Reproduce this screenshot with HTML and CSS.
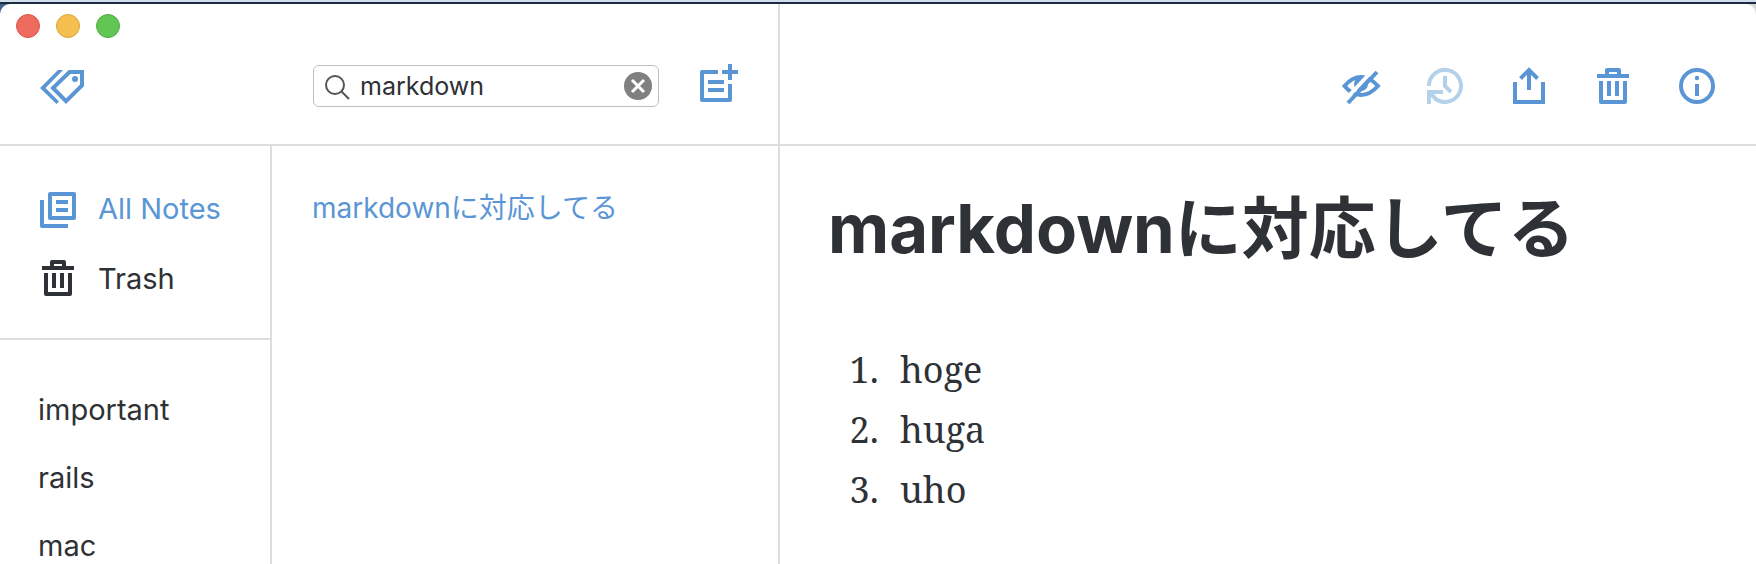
FILE: index.html
```html
<!DOCTYPE html>
<html lang="ja">
<head>
  <meta charset="UTF-8" />
  <meta name="viewport" content="width=device-width, initial-scale=1" />
  <title>markdownに対応してる</title>
  <link rel="stylesheet" href="styles.css">
</head>
<body>
  <svg class="symbols" aria-hidden="true">
    <symbol id="icon-trash" viewBox="0 0 40 40">
      <g fill="none" stroke="currentColor" stroke-width="4" stroke-linejoin="round">
        <path d="M4 10H36" />
        <path d="M14 9V4H26V9" />
        <path d="M8 15V36H32V15" />
        <path d="M16 15V30M24 15V30" />
      </g>
    </symbol>
  </svg>

  <div class="window">
    <div class="left-pane">
      <header class="left-header">
        <div class="lights">
          <button class="light close" aria-label="Close"></button>
          <button class="light minimize" aria-label="Minimize"></button>
          <button class="light maximize" aria-label="Maximize"></button>
        </div>
        <div class="left-toolbar">
          <button class="icon-btn" aria-label="Tags">
            <svg class="icon-wide" viewBox="0 0 48 40">
              <path fill="currentColor" d="M20 4H25L7.5 22 21 35.500 18.500 38 2 22Z" />
              <path fill="none" stroke="currentColor" stroke-width="4" d="M31.500 6H44V19.500L28 35.200 15 22Z" />
              <circle fill="currentColor" cx="37" cy="13" r="3" />
            </svg>
          </button>
          <div class="search">
            <svg class="search-icon" viewBox="0 0 28 28">
              <circle cx="11" cy="13" r="9" />
              <path d="M17.500 19.500L25 27" />
            </svg>
            <input type="text" class="search-input" aria-label="Search notes" value="markdown">
            <button class="clear-btn" aria-label="Clear search">
              <svg viewBox="0 0 28 28">
                <circle cx="14" cy="14" r="14" fill="#808080" />
                <path d="M8 8L20 20M20 8L8 20" stroke="#fff" stroke-width="3" />
              </svg>
            </button>
          </div>
          <button class="icon-btn" aria-label="New note">
            <svg class="icon" viewBox="0 0 40 40">
              <g fill="none" stroke="currentColor" stroke-width="4">
                <path stroke-linejoin="round" d="M20 6H4V34H32V18" />
                <path d="M32 -2V14M24 6H40" />
                <path d="M10 16H26M10 24H26" />
              </g>
            </svg>
          </button>
        </div>
      </header>

      <div class="columns">
        <nav class="sidebar">
          <div class="folders">
            <a class="folder active" href="#all">
              <svg class="icon" viewBox="0 0 40 40">
                <g fill="none" stroke="currentColor" stroke-width="4" stroke-linejoin="round">
                  <path d="M12 6H36V30H12Z" />
                  <path d="M4 12V38H30" />
                  <path d="M18 14H30M18 22H30" />
                </g>
              </svg>
              All Notes
            </a>
            <a class="folder" href="#trash">
              <svg class="icon"><use href="#icon-trash" /></svg>
              Trash
            </a>
          </div>
          <div class="tags">
            <a class="tag" href="#important">important</a>
            <a class="tag" href="#rails">rails</a>
            <a class="tag" href="#mac">mac</a>
          </div>
        </nav>
        <section class="note-list">
          <a class="note" href="#note">markdownに対応してる</a>
        </section>
      </div>
    </div>

    <main class="editor">
      <header class="editor-toolbar">
        <button class="icon-btn" aria-label="Preview">
          <svg class="icon" viewBox="0 0 40 40">
            <path fill="none" stroke="currentColor" stroke-width="4" d="M3.500 20Q11 11 20 11T37 20Q29 29 20 29T3.500 20Z" />
            <circle fill="currentColor" cx="20" cy="18" r="7" />
            <path stroke="#fff" stroke-width="4" d="M33 3L3 35" />
            <path stroke="currentColor" stroke-width="4" d="M36 6L7 37" />
          </svg>
        </button>
        <button class="icon-btn" aria-label="History" disabled>
          <svg class="icon" viewBox="0 0 40 40">
            <g fill="none" stroke="currentColor" stroke-width="4">
              <path d="M4 20A16 16 0 1 1 9 31.500" />
              <path d="M18 26H4V38" />
              <path d="M4.500 26.500L10 32" />
              <path d="M20 10V20L26 26" />
            </g>
          </svg>
        </button>
        <button class="icon-btn" aria-label="Share">
          <svg class="icon" viewBox="0 0 40 40">
            <g fill="none" stroke="currentColor" stroke-width="4">
              <path d="M6 16V36H34V16" />
              <path d="M20 4V24" />
              <path d="M11.500 12.500L20 4L28.500 12.500" />
            </g>
          </svg>
        </button>
        <button class="icon-btn" aria-label="Delete">
          <svg class="icon"><use href="#icon-trash" /></svg>
        </button>
        <button class="icon-btn" aria-label="Info">
          <svg class="icon" viewBox="0 0 40 40">
            <circle fill="none" stroke="currentColor" stroke-width="4" cx="20" cy="20" r="16" />
            <circle fill="currentColor" cx="20" cy="12" r="2.200" />
            <path stroke="currentColor" stroke-width="4" d="M20 18V30" />
          </svg>
        </button>
      </header>
      <article class="content">
        <h1>markdownに対応してる</h1>
        <ol>
          <li>hoge</li>
          <li>huga</li>
          <li>uho</li>
        </ol>
      </article>
    </main>
  </div>
</body>
</html>
```
FILE: styles.css
```css
:root {
  --blue: #5a96d5;
  --dark: #2e3135;
  --line: #dcdddf;
}

* {
  box-sizing: border-box;
}

body {
  margin: 0;
  padding-top: 2px;
  height: 100vh;
  overflow: hidden;
  display: flex;
  flex-direction: column;
  background: linear-gradient(#d3dfee 2px, #1d2b40 2px, #1d2b40 4px, transparent 4px),
    linear-gradient(to right, #44638a, #d8d8d8);
  color: var(--dark);
  font-family: Inter, "Noto Sans CJK JP", sans-serif;
  font-size: 28px;
}

button {
  padding: 0;
  border: none;
  background: none;
}

a {
  color: inherit;
  text-decoration: none;
}

.symbols {
  display: none;
}

.window {
  flex: 1;
  min-height: 0;
  margin-top: 2px;
  display: flex;
  background: #fff;
  border-radius: 10px 10px 0 0;
  overflow: hidden;
}

/* left side */
.left-pane {
  width: 780px;
  flex-shrink: 0;
  display: flex;
  flex-direction: column;
  border-right: 2px solid var(--line);
}

.left-header {
  height: 142px;
  padding: 10px 40px 0 16px;
  border-bottom: 2px solid var(--line);
}

.lights {
  display: flex;
  gap: 16px;
}

.light {
  width: 24px;
  height: 24px;
  border-radius: 50%;
  border: 1px solid;
}

.close {
  background: #ed6b5f;
  border-color: #d9574c;
}

.minimize {
  background: #f5bf4f;
  border-color: #dba33d;
}

.maximize {
  background: #62c655;
  border-color: #52a943;
}

.left-toolbar {
  display: flex;
  align-items: center;
  margin-top: 27px;
  padding-left: 22px;
}

.icon-btn {
  display: block;
  color: var(--blue);
  cursor: pointer;
}

.icon-btn:disabled {
  color: #b4d1ec;
}

.icon,
.icon-wide {
  display: block;
  flex-shrink: 0;
  width: 40px;
  height: 40px;
  overflow: visible;
}

.icon-wide {
  width: 48px;
}

.search {
  display: flex;
  align-items: center;
  width: 346px;
  height: 42px;
  margin-left: auto;
  margin-right: 39px;
  padding: 0 6px 0 10px;
  border: 1px solid #c0c0c0;
  border-radius: 6px;
}

.search-icon {
  width: 28px;
  height: 28px;
  fill: none;
  stroke: #555;
  stroke-width: 2;
}

.search-input {
  flex: 1;
  min-width: 0;
  padding: 0 0 0 8px;
  border: none;
  outline: none;
  background: none;
  color: var(--dark);
  font-family: inherit;
  font-size: 25px;
}

.clear-btn,
.clear-btn svg {
  display: block;
  width: 28px;
  height: 28px;
}

.columns {
  flex: 1;
  min-height: 0;
  display: flex;
}

.sidebar {
  width: 272px;
  border-right: 2px solid var(--line);
  font-size: 29px;
}

.folders {
  padding: 27px 0 25px;
  border-bottom: 2px solid var(--line);
}

.folder {
  display: flex;
  align-items: center;
  gap: 20px;
  height: 70px;
  padding-left: 38px;
}

.active {
  color: var(--blue);
}

.tags {
  padding-top: 36px;
}

.tag {
  display: block;
  padding-left: 38px;
  line-height: 68px;
}

.note-list {
  flex: 1;
  padding: 27px 40px;
}

.note {
  display: block;
  line-height: 70px;
  color: var(--blue);
}

/* right side */
.editor {
  flex: 1;
  min-width: 0;
}

.editor-toolbar {
  display: flex;
  justify-content: flex-end;
  align-items: flex-end;
  gap: 44px;
  height: 142px;
  padding: 0 39px 38px 0;
  border-bottom: 2px solid var(--line);
}

.content {
  padding: 38px 48px;
}

h1 {
  margin: 0 0 66px;
  font-size: 67px;
  line-height: 90px;
}

ol {
  margin: 0;
  padding-left: 60px;
  font-family: "Noto Serif", "DejaVu Serif Condensed", "DejaVu Serif", serif;
  font-size: 36px;
  line-height: 60px;
}

li {
  padding-left: 12px;
}
```
